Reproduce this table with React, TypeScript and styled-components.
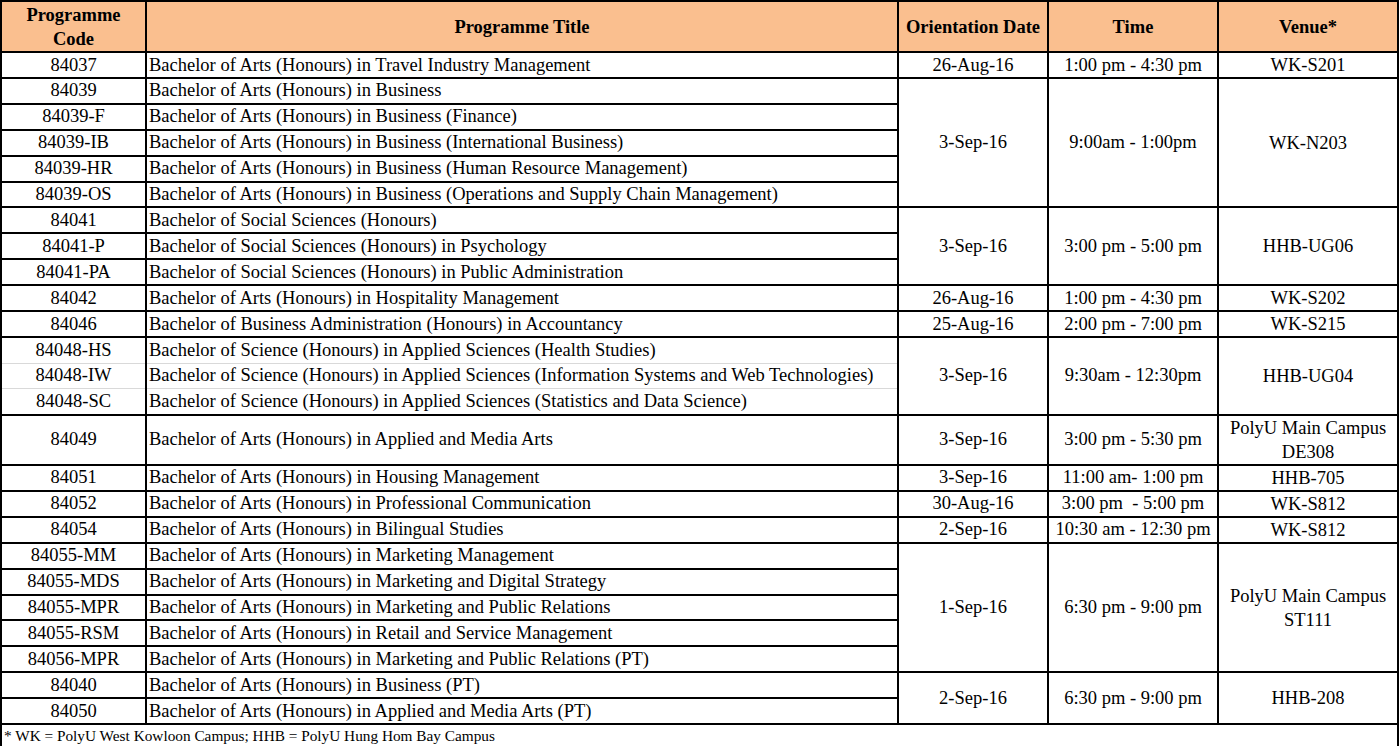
import styled, { createGlobalStyle } from "styled-components";

const GlobalStyle = createGlobalStyle`
  html, body {
    margin: 0;
    padding: 0;
    background: #fff;
    overflow: hidden;
  }
  body {
    font-family: "Liberation Serif", "Times New Roman", serif;
    color: #000;
  }
`;

interface Programme {
  code: string;
  title: string;
}

interface Group {
  date: string;
  time: string;
  venue: string[];
  rows: Programme[];
  thin?: boolean;
  tall?: boolean;
}

const groups: Group[] = [
  {
    date: "26-Aug-16",
    time: "1:00 pm - 4:30 pm",
    venue: ["WK-S201"],
    rows: [{ code: "84037", title: "Bachelor of Arts (Honours) in Travel Industry Management" }],
  },
  {
    date: "3-Sep-16",
    time: "9:00am - 1:00pm",
    venue: ["WK-N203"],
    rows: [
      { code: "84039", title: "Bachelor of Arts (Honours) in Business" },
      { code: "84039-F", title: "Bachelor of Arts (Honours) in Business (Finance)" },
      { code: "84039-IB", title: "Bachelor of Arts (Honours) in Business (International Business)" },
      { code: "84039-HR", title: "Bachelor of Arts (Honours) in Business (Human Resource Management)" },
      { code: "84039-OS", title: "Bachelor of Arts (Honours) in Business (Operations and Supply Chain Management)" },
    ],
  },
  {
    date: "3-Sep-16",
    time: "3:00 pm - 5:00 pm",
    venue: ["HHB-UG06"],
    rows: [
      { code: "84041", title: "Bachelor of Social Sciences (Honours)" },
      { code: "84041-P", title: "Bachelor of Social Sciences (Honours) in Psychology" },
      { code: "84041-PA", title: "Bachelor of Social Sciences (Honours) in Public Administration" },
    ],
  },
  {
    date: "26-Aug-16",
    time: "1:00 pm - 4:30 pm",
    venue: ["WK-S202"],
    rows: [{ code: "84042", title: "Bachelor of Arts (Honours) in Hospitality Management" }],
  },
  {
    date: "25-Aug-16",
    time: "2:00 pm - 7:00 pm",
    venue: ["WK-S215"],
    rows: [{ code: "84046", title: "Bachelor of Business Administration (Honours) in Accountancy" }],
  },
  {
    date: "3-Sep-16",
    time: "9:30am - 12:30pm",
    venue: ["HHB-UG04"],
    thin: true,
    rows: [
      { code: "84048-HS", title: "Bachelor of Science (Honours) in Applied Sciences (Health Studies)" },
      { code: "84048-IW", title: "Bachelor of Science (Honours) in Applied Sciences (Information Systems and Web Technologies)" },
      { code: "84048-SC", title: "Bachelor of Science (Honours) in Applied Sciences (Statistics and Data Science)" },
    ],
  },
  {
    date: "3-Sep-16",
    time: "3:00 pm - 5:30 pm",
    venue: ["PolyU Main Campus", "DE308"],
    tall: true,
    rows: [{ code: "84049", title: "Bachelor of Arts (Honours) in Applied and Media Arts" }],
  },
  {
    date: "3-Sep-16",
    time: "11:00 am- 1:00 pm",
    venue: ["HHB-705"],
    rows: [{ code: "84051", title: "Bachelor of Arts (Honours) in Housing Management" }],
  },
  {
    date: "30-Aug-16",
    time: "3:00 pm \u00a0- 5:00 pm",
    venue: ["WK-S812"],
    rows: [{ code: "84052", title: "Bachelor of Arts (Honours) in Professional Communication" }],
  },
  {
    date: "2-Sep-16",
    time: "10:30 am - 12:30 pm",
    venue: ["WK-S812"],
    rows: [{ code: "84054", title: "Bachelor of Arts (Honours) in Bilingual Studies" }],
  },
  {
    date: "1-Sep-16",
    time: "6:30 pm - 9:00 pm",
    venue: ["PolyU Main Campus", "ST111"],
    rows: [
      { code: "84055-MM", title: "Bachelor of Arts (Honours) in Marketing Management" },
      { code: "84055-MDS", title: "Bachelor of Arts (Honours) in Marketing and Digital Strategy" },
      { code: "84055-MPR", title: "Bachelor of Arts (Honours) in Marketing and Public Relations" },
      { code: "84055-RSM", title: "Bachelor of Arts (Honours) in Retail and Service Management" },
      { code: "84056-MPR", title: "Bachelor of Arts (Honours) in Marketing and Public Relations (PT)" },
    ],
  },
  {
    date: "2-Sep-16",
    time: "6:30 pm - 9:00 pm",
    venue: ["HHB-208"],
    rows: [
      { code: "84040", title: "Bachelor of Arts (Honours) in Business (PT)" },
      { code: "84050", title: "Bachelor of Arts (Honours) in Applied and Media Arts (PT)" },
    ],
  },
];

const Sheet = styled.table`
  border-collapse: collapse;
  table-layout: fixed;
  width: 1397px;
  font-size: 18.5px;
  line-height: 23px;
`;

const HeadRow = styled.tr`
  height: 51px;
  background: #fabf8f;
`;

const HeadCell = styled.th`
  border: 2px solid #000;
  padding: 0 2px;
  font-size: 18.5px;
  font-weight: bold;
  text-align: center;
  vertical-align: middle;
  line-height: 24px;
  white-space: nowrap;
`;

const BodyRow = styled.tr<{ $tall?: boolean }>`
  height: ${(p) => (p.$tall ? "50px" : "25.9px")};
`;

const Cell = styled.td<{ $align?: "left" | "center"; $thinTop?: boolean; $thinBottom?: boolean }>`
  border: 2px solid #000;
  ${(p) => (p.$thinTop ? "border-top: 1px solid #d9d9d9;" : "")}
  ${(p) => (p.$thinBottom ? "border-bottom: 1px solid #d9d9d9;" : "")}
  padding: 0 2px;
  text-align: ${(p) => p.$align ?? "center"};
  vertical-align: middle;
  white-space: nowrap;
  overflow: hidden;
`;

const VenueLine = styled.div`
  line-height: 24px;
`;

const NoteCell = styled.td`
  border: 2px solid #000;
  padding: 0 2px;
  font-size: 15.3px;
  line-height: 20px;
  height: 22px;
  text-align: left;
  vertical-align: middle;
  white-space: nowrap;
`;

export default function App() {
  return (
    <>
      <GlobalStyle />
      <Sheet>
        <colgroup>
          <col style={{ width: 145 }} />
          <col style={{ width: 752 }} />
          <col style={{ width: 150 }} />
          <col style={{ width: 170 }} />
          <col style={{ width: 180 }} />
        </colgroup>
        <thead>
          <HeadRow>
            <HeadCell>
              Programme
              <br />
              Code
            </HeadCell>
            <HeadCell>Programme Title</HeadCell>
            <HeadCell>Orientation Date</HeadCell>
            <HeadCell>Time</HeadCell>
            <HeadCell>Venue*</HeadCell>
          </HeadRow>
        </thead>
        <tbody>
          {groups.map((g) =>
            g.rows.map((r, i) => {
              const thinTop = g.thin && i > 0;
              const thinBottom = g.thin && i < g.rows.length - 1;
              return (
                <BodyRow key={r.code} $tall={g.tall}>
                  <Cell $thinTop={thinTop} $thinBottom={thinBottom}>
                    {r.code}
                  </Cell>
                  <Cell $align="left" $thinTop={thinTop} $thinBottom={thinBottom}>
                    {r.title}
                  </Cell>
                  {i === 0 && (
                    <>
                      <Cell rowSpan={g.rows.length}>{g.date}</Cell>
                      <Cell rowSpan={g.rows.length}>{g.time}</Cell>
                      <Cell rowSpan={g.rows.length}>
                        {g.venue.map((v) => (
                          <VenueLine key={v}>{v}</VenueLine>
                        ))}
                      </Cell>
                    </>
                  )}
                </BodyRow>
              );
            })
          )}
          <tr>
            <NoteCell colSpan={5}>* WK = PolyU West Kowloon Campus; HHB = PolyU Hung Hom Bay Campus</NoteCell>
          </tr>
        </tbody>
      </Sheet>
    </>
  );
}
